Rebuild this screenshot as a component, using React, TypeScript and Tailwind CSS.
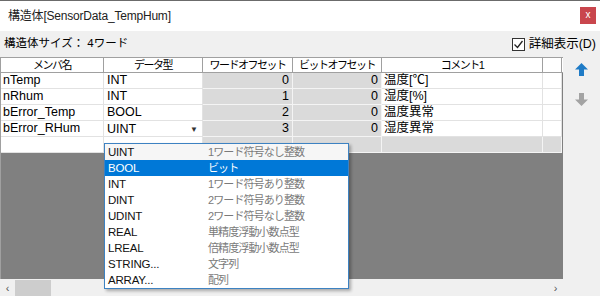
import React from "react";

const font = { fontFamily: '"Liberation Sans", "Noto Sans CJK JP", sans-serif' };

const rows = [
  { name: "nTemp", type: "INT", w: "0", b: "0", c: "温度[℃]" },
  { name: "nRhum", type: "INT", w: "1", b: "0", c: "湿度[%]" },
  { name: "bError_Temp", type: "BOOL", w: "2", b: "0", c: "温度異常" },
  { name: "bError_RHum", type: "UINT", w: "3", b: "0", c: "湿度異常", combo: true },
];

const options = [
  ["UINT", "1ワード符号なし整数"],
  ["BOOL", "ビット"],
  ["INT", "1ワード符号あり整数"],
  ["DINT", "2ワード符号あり整数"],
  ["UDINT", "2ワード符号なし整数"],
  ["REAL", "単精度浮動小数点型"],
  ["LREAL", "倍精度浮動小数点型"],
  ["STRING...", "文字列"],
  ["ARRAY...", "配列"],
];

function Arrow({ color, down }: { color: string; down?: boolean }) {
  return (
    <svg width="13" height="13" viewBox="0 0 13 13" className={down ? "rotate-180" : ""}>
      <polygon points="6.5,0 13,6.5 9,6.5 9,13 4,13 4,6.5 0,6.5" fill={color} />
    </svg>
  );
}

export default function App() {
  return (
    <div className="relative w-[600px] h-[296px] overflow-hidden bg-[#f0f0f0] text-[12px] text-black" style={font}>
      {/* title bar */}
      <div className="h-[31px] bg-white border-t border-[#6b6b6b] flex items-center justify-between pl-2 pr-[4px]">
        <span className="text-[12px] text-[#222] tracking-[-0.2px]">構造体[SensorData_TempHum]</span>
        <div className="w-[16px] h-[17px] bg-[#c9464d] flex items-center justify-center text-white text-[10px] leading-none mb-[2px]">x</div>
      </div>
      {/* info row */}
      <div className="h-[26px] flex items-center justify-between pl-[4px] pr-[4px]">
        <span className="text-[11.5px]">構造体サイズ：&nbsp;4ワード</span>
        <div className="flex items-center gap-[4px]">
          <div className="w-[13px] h-[13px] border border-[#333] bg-white flex items-center justify-center">
            <svg width="11" height="11" viewBox="0 0 11 11">
              <polyline points="1.5,5.5 4.5,8.5 9.5,2" fill="none" stroke="#222" strokeWidth="1.3" />
            </svg>
          </div>
          <span className="text-[12.5px]">詳細表示(D)</span>
        </div>
      </div>
      {/* grid + side */}
      <div className="flex">
        <div className="w-[563px] flex flex-col">
          <div className="h-[222px] bg-[#808080] flex flex-col border-l border-[#a0a0a0]">
            {/* header */}
            <div className="flex h-[16px] bg-white border-t border-b border-[#a0a0a0] text-[11px] leading-[14px] tracking-[-1.5px]">
              <div className="w-[103px] border-r border-[#a0a0a0] text-center">メンバ名</div>
              <div className="w-[99px] border-r border-[#a0a0a0] text-center">データ型</div>
              <div className="w-[90px] border-r border-[#a0a0a0] text-center">ワードオフセット</div>
              <div className="w-[89px] border-r border-[#a0a0a0] text-center">ビットオフセット</div>
              <div className="w-[161px] border-r border-[#a0a0a0] text-center">コメント1</div>
              <div className="w-[19px] border-r border-[#a0a0a0]" />
            </div>
            {rows.map((r) => (
              <div key={r.name} className="flex h-[16px] leading-[15px] text-[12.5px]">
                <div className="w-[103px] bg-white border-r border-b border-[#e2e2e2] pl-[2px]">{r.name}</div>
                <div className="w-[99px] bg-white border-r border-b border-[#e2e2e2] pl-[3px] flex justify-between pr-[4px]">
                  <span className={r.combo ? "mt-[1px]" : ""}>{r.type}</span>
                  {r.combo && <span className="text-[8px] leading-[16px] text-[#333] mt-[1px]">▼</span>}
                </div>
                <div className="w-[90px] bg-[#dadada] border-r border-b border-[#f4f4f4] text-right pr-[3px]">{r.w}</div>
                <div className="w-[89px] bg-[#dadada] border-r border-b border-[#f4f4f4] text-right pr-[3px]">{r.b}</div>
                <div className="w-[161px] bg-white border-r border-b border-[#e2e2e2] pl-[2px]">{r.c}</div>
                <div className="w-[19px] bg-white border-r border-b border-[#e2e2e2]" />
              </div>
            ))}
            {/* empty new row */}
            <div className="flex h-[16px]">
              <div className="w-[103px] bg-white border-r border-b border-[#e2e2e2]" />
              <div className="w-[99px] bg-white border-r border-b border-[#e2e2e2]" />
              <div className="w-[90px] bg-[#dadada] border-r border-b border-[#f4f4f4]" />
              <div className="w-[89px] bg-[#dadada] border-r border-b border-[#f4f4f4]" />
              <div className="w-[161px] bg-[#dadada] border-r border-b border-[#f4f4f4]" />
              <div className="w-[19px] bg-[#dadada] border-r border-b border-[#f4f4f4]" />
            </div>
          </div>
          {/* horizontal scrollbar */}
          <div className="h-[18px] flex items-center bg-[#f0f0f0]">
            <span className="w-[15px] text-center text-[11px] text-[#555]">‹</span>
            <div className="w-[36px] h-[16px] bg-[#cdcdcd]" />
            <div className="flex-1" />
            <span className="w-[15px] text-center text-[11px] text-[#555]">›</span>
          </div>
        </div>
        <div className="flex-1 flex flex-col items-center pt-[6px] gap-[17px]">
          <Arrow color="#1f7bc6" />
          <Arrow color="#a3a3a3" down />
        </div>
      </div>
      {/* dropdown list */}
      <div className="absolute left-[104px] top-[143px] w-[245px] border border-[#3d82c2] bg-white shadow-[2px_2px_3px_rgba(0,0,0,0.3)]">
        {options.map(([t, d], i) => (
          <div
            key={t}
            className={
              "flex h-[16px] leading-[16px] " +
              (i === 1 ? "bg-[#0078d7] text-white" : i === 0 ? "bg-[#f6f6f6]" : "")
            }
          >
            <span className={"w-[103px] pl-[3px] text-[11.5px] tracking-[-0.2px] " + (i === 1 ? "text-white" : "text-[#111]")}>{t}</span>
            <span className={"text-[11px] tracking-[-0.9px] " + (i === 1 ? "text-white" : "text-[#7a7a7a]")}>{d}</span>
          </div>
        ))}
      </div>
    </div>
  );
}
